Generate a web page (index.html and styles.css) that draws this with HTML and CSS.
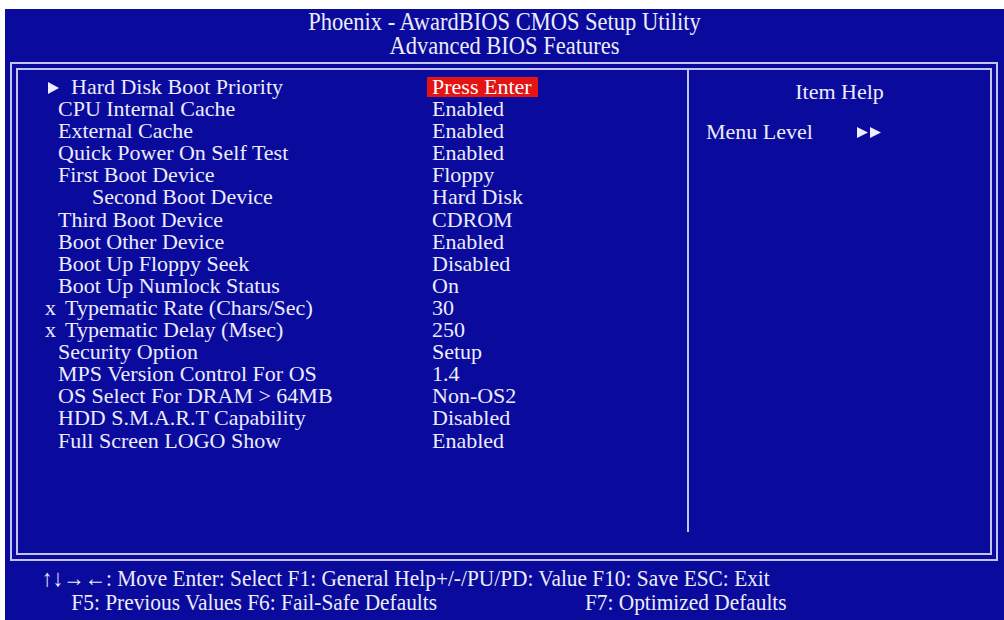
FILE: index.html
```html
<!DOCTYPE html>
<html>
<head>
  <link rel="stylesheet" href="styles.css">
</head>
<body>
<div class="screen">
  <!-- Title bar -->
  <div class="title">
    <div class="title-line">Phoenix - AwardBIOS CMOS Setup Utility</div>
    <div class="title-line">Advanced BIOS Features</div>
  </div>

  <!-- Double frame with the settings and the help panel -->
  <div class="frame">
    <div class="frame-inner">
      <div class="settings">
        <div class="row">
          <div class="label"><span class="mark arrow"><svg width="11" height="12" viewBox="0 0 11 12"><path d="M0 0 L11 6 L0 12 Z" fill="#eef"/></svg></span>Hard Disk Boot Priority</div>
          <div class="value"><span class="selected">Press Enter</span></div>
        </div>
        <div class="row"><div class="label"><span class="name">CPU Internal Cache</span></div><div class="value">Enabled</div></div>
        <div class="row"><div class="label"><span class="name">External Cache</span></div><div class="value">Enabled</div></div>
        <div class="row"><div class="label"><span class="name">Quick Power On Self Test</span></div><div class="value">Enabled</div></div>
        <div class="row"><div class="label"><span class="name">First Boot Device</span></div><div class="value">Floppy</div></div>
        <div class="row"><div class="label"><span class="name indent">Second Boot Device</span></div><div class="value">Hard Disk</div></div>
        <div class="row"><div class="label"><span class="name">Third Boot Device</span></div><div class="value">CDROM</div></div>
        <div class="row"><div class="label"><span class="name">Boot Other Device</span></div><div class="value">Enabled</div></div>
        <div class="row"><div class="label"><span class="name">Boot Up Floppy Seek</span></div><div class="value">Disabled</div></div>
        <div class="row"><div class="label"><span class="name">Boot Up Numlock Status</span></div><div class="value">On</div></div>
        <div class="row"><div class="label"><span class="mark x">x</span>Typematic Rate (Chars/Sec)</div><div class="value">30</div></div>
        <div class="row"><div class="label"><span class="mark x">x</span>Typematic Delay (Msec)</div><div class="value">250</div></div>
        <div class="row"><div class="label"><span class="name">Security Option</span></div><div class="value">Setup</div></div>
        <div class="row"><div class="label"><span class="name">MPS Version Control For OS</span></div><div class="value">1.4</div></div>
        <div class="row"><div class="label"><span class="name">OS Select For DRAM &gt; 64MB</span></div><div class="value">Non-OS2</div></div>
        <div class="row"><div class="label"><span class="name">HDD S.M.A.R.T Capability</span></div><div class="value">Disabled</div></div>
        <div class="row"><div class="label"><span class="name">Full Screen LOGO Show</span></div><div class="value">Enabled</div></div>
      </div>

      <div class="help">
        <div class="help-title">Item Help</div>
        <div class="help-row">
          <span class="help-key">Menu Level</span>
          <svg width="25" height="11" viewBox="0 0 25 11"><path d="M0 0 L11 5.5 L0 11 Z M13 0 L24 5.5 L13 11 Z" fill="#eef"/></svg>
        </div>
      </div>
    </div>
  </div>

  <!-- Key legend -->
  <div class="keys">
    <div class="keys-line">↑↓→←: Move Enter: Select F1: General Help+/-/PU/PD: Value F10: Save ESC: Exit</div>
    <div class="keys-line second">
      <span class="keys-left">F5: Previous Values F6: Fail-Safe Defaults</span>
      <span>F7: Optimized Defaults</span>
    </div>
  </div>
</div>
</body>
</html>
```

FILE: styles.css
```css
/* Reset */
* {
  margin: 0;
  padding: 0;
  box-sizing: border-box;
}

body {
  background-color: #fff;
  font-family: "Liberation Serif", "Times New Roman", serif;
  color: #ececfa;
}

/* Blue BIOS screen */
.screen {
  margin: 9px 0 0 5px;
  width: 999px;
  height: 611px;
  background-color: #0a0a9c;
}

/* Title at the top */
.title {
  height: 53px;
  padding-top: 1px;
  text-align: center;
}

.title-line {
  font-size: 25px;
  line-height: 24px;
  transform: scaleX(0.9);
}

/* Double line frame */
.frame {
  margin: 0 6px 0 5px;
  border: 2px solid #c4c4f2;
  padding: 4px;
  height: 499px;
}

.frame-inner {
  border: 2px solid #c4c4f2;
  height: 100%;
  display: flex;
  padding-bottom: 21px;
}

/* Left column: settings */
.settings {
  width: 669px;
  padding: 6px 0 0 27px;
  font-size: 22px;
}

.row {
  display: flex;
  height: 22.1px;
  line-height: 22px;
}

.label {
  width: 387px;
  white-space: nowrap;
}

.name {
  margin-left: 13px;
}

.name.indent {
  margin-left: 47px;
}

.mark {
  display: inline-block;
}

.mark.arrow {
  width: 26px;
  padding-left: 3px;
}

.mark.x {
  width: 20px;
}

.value {
  white-space: nowrap;
}

.selected {
  display: inline-block;
  background-color: #e41414;
  color: #fff;
  line-height: 20px;
  padding: 0 6px 0 5px;
  margin: 1px 0 0 -5px;
}

/* Right column: item help */
.help {
  flex: 1;
  border-left: 2px solid #c4c4f2;
  padding: 11px 0 0 17px;
  font-size: 22px;
  line-height: 22px;
}

.help-title {
  text-align: center;
  margin-left: -17px;
}

.help-row {
  display: flex;
  align-items: center;
  margin-top: 18px;
}

.help-key {
  width: 151px;
}

/* Key legend at the bottom */
.keys {
  padding: 5px 0 0 37px;
  font-size: 24px;
  line-height: 24px;
  white-space: nowrap;
}

.keys-line {
  transform: scaleX(0.89);
  transform-origin: left;
}

.keys-line.second {
  padding-left: 33px;
}

.keys-left {
  display: inline-block;
  width: 571px;
}
```
